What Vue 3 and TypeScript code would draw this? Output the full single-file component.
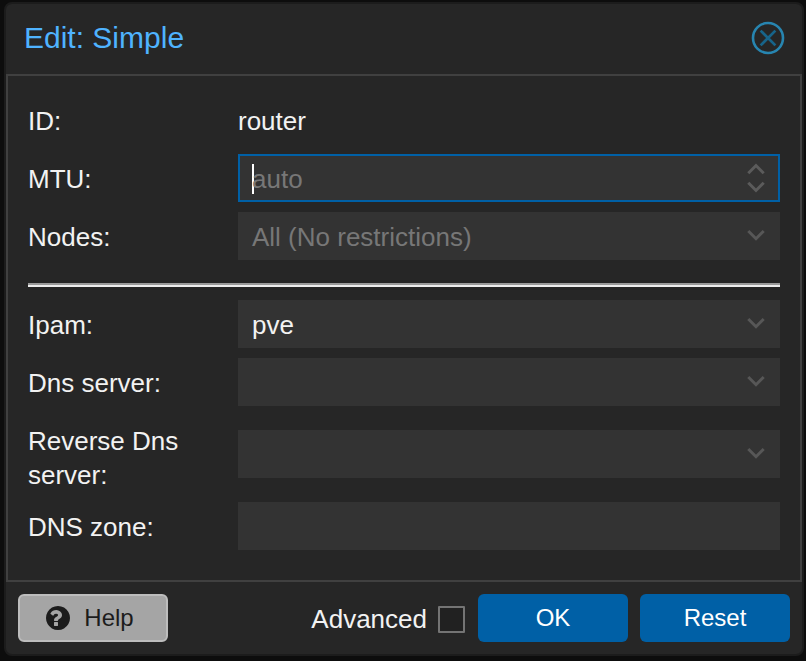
<script setup lang="ts">
import { ref } from 'vue'

interface Field {
  label: string
  value: string
  placeholder?: string
  kind: 'display' | 'spinner' | 'combo' | 'text'
  focused?: boolean
}

const zoneFields: Field[] = [
  { label: 'ID:', value: 'router', kind: 'display' },
  { label: 'MTU:', value: '', placeholder: 'auto', kind: 'spinner', focused: true },
  { label: 'Nodes:', value: '', placeholder: 'All (No restrictions)', kind: 'combo' },
]
const dnsFields: Field[] = [
  { label: 'Ipam:', value: 'pve', kind: 'combo' },
  { label: 'Dns server:', value: '', kind: 'combo' },
  { label: 'Reverse Dns server:', value: '', kind: 'combo' },
  { label: 'DNS zone:', value: '', kind: 'text' },
]
const groups = [zoneFields, dnsFields]
const advanced = ref(false)
</script>

<template>
  <div class="backdrop">
    <section class="window">
      <header class="header">
        <h1 class="title">Edit: Simple</h1>
        <button class="close" type="button">
          <svg width="34" height="34" viewBox="0 0 34 34" fill="none">
            <circle cx="17" cy="17" r="15" stroke="#2785b0" stroke-width="2.6" />
            <path d="M9.6 9.6 24.4 24.4M24.4 9.6 9.6 24.4" stroke="#17648a" stroke-width="2.7" />
          </svg>
        </button>
      </header>

      <main class="panel">
        <template v-for="(group, index) in groups" :key="index">
          <div v-if="index > 0" class="rule"></div>
          <div class="group">
            <div v-for="field in group" :key="field.label" class="row">
              <div class="label">{{ field.label }}</div>
              <div v-if="field.kind === 'display'" class="display">{{ field.value }}</div>
              <div v-else class="field" :class="{ focused: field.focused }">
                <span v-if="field.focused" class="caret"></span>
                <span class="value" :class="{ placeholder: !field.value }">{{ field.value || field.placeholder }}</span>
                <svg v-if="field.kind === 'spinner'" class="trigger" width="20" height="44" viewBox="0 0 20 44" fill="none">
                  <path d="M2.3 17.2 10 9.5 17.7 17.2M2.3 26.8 10 34.5 17.7 26.8" stroke="#5b5b5b" stroke-width="3" />
                </svg>
                <svg v-if="field.kind === 'combo'" class="trigger" width="20" height="44" viewBox="0 0 20 44" fill="none">
                  <path d="M2.3 17 10 24.7 17.7 17" stroke="#575757" stroke-width="3" />
                </svg>
              </div>
            </div>
          </div>
        </template>
      </main>

      <footer class="footer">
        <button class="button help" type="button">
          <svg width="24" height="24" viewBox="128 128 1536 1536" fill="#1c1c1c">
            <path d="M896 1376v-192q0-14-9-23t-23-9h-192q-14 0-23 9t-9 23v192q0 14 9 23t23 9h192q14 0 23-9t9-23zm256-672q0-88-55.5-163t-138.5-116-170-41q-243 0-371 213-15 24 8 42l132 100q7 6 19 6 16 0 25-12 53-68 86-92 34-24 86-24 48 0 85.5 26t37.5 59q0 38-20 61t-68 45q-63 28-115.5 86.5t-52.5 125.5v36q0 14 9 23t23 9h192q14 0 23-9t9-23q0-19 21.5-49.5t54.5-49.5q32-18 49-28.5t46-35 44.5-48 28-60.5 12.5-81zm512 192q0 209-103 385.5t-279.5 279.5-385.5 103-385.5-103-279.5-279.5-103-385.5 103-385.5 279.5-279.5 385.5-103 385.5 103 279.5 279.5 103 385.5z" />
          </svg>
          <span>Help</span>
        </button>
        <label class="advanced">
          <span>Advanced</span>
          <input v-model="advanced" class="checkbox" type="checkbox" />
        </label>
        <button class="button primary" type="button">OK</button>
        <button class="button primary" type="button">Reset</button>
      </footer>
    </section>
  </div>
</template>

<style>
body {
  background: #101010;
}
</style>

<style scoped>
.backdrop {
  box-sizing: border-box;
  width: 806px;
  height: 661px;
  padding: 2px 2px 5px 4px;
  overflow: hidden;
  background: #0d0d0d;
  font-family: "Liberation Sans", Arial, sans-serif;
  font-size: 26px;
  line-height: 34px;
  color: #f2f2f2;
}
.window {
  box-sizing: border-box;
  display: flex;
  flex-direction: column;
  height: 654px;
  border: 2px solid #1c1c1c;
  border-radius: 8px;
  background: #262626;
}
.header {
  box-sizing: border-box;
  display: flex;
  align-items: center;
  justify-content: space-between;
  height: 70px;
  padding: 0 17px 2px 18px;
}
.title {
  margin: 0;
  font-size: 30px;
  font-weight: 400;
  color: #4fb3ff;
}
.close {
  display: flex;
  padding: 0;
  border: 0;
  background: none;
}
.panel {
  box-sizing: border-box;
  height: 508px;
  padding: 20px;
  border: 2px solid #404040;
}
.group {
  display: flex;
  flex-direction: column;
  gap: 10px;
}
.row {
  display: flex;
  align-items: center;
}
.label {
  box-sizing: border-box;
  width: 210px;
  min-height: 48px;
  padding: 8px 40px 0 0;
  align-self: flex-start;
}
.display {
  flex: 1;
  padding-top: 2px;
}
.field {
  box-sizing: border-box;
  display: flex;
  flex: 1;
  align-items: center;
  height: 48px;
  padding: 0 12px;
  border: 2px solid #333333;
  background: #333333;
}
.focused {
  border-color: #0060a6;
}
.caret {
  width: 2px;
  height: 30px;
  margin: 2px -2px 0 0;
  background: #ffffff;
}
.value {
  flex: 1;
  white-space: nowrap;
  padding-top: 2px;
}
.placeholder {
  color: #777777;
}
.rule {
  height: 2px;
  margin: 23px 0 13px;
  border-top: 2px solid #9a9a9a;
  background: #eeeeee;
}
.footer {
  display: flex;
  align-items: center;
  gap: 12px;
  height: 72px;
  padding: 0 12px;
}
.button {
  box-sizing: border-box;
  display: flex;
  align-items: center;
  justify-content: center;
  width: 150px;
  height: 48px;
  padding: 0;
  border: 0;
  border-radius: 6px;
  font: 24px/34px "Liberation Sans", Arial, sans-serif;
}
.help {
  gap: 14px;
  margin-right: auto;
  padding-right: 6px;
  border: 2px solid #bdbdbd;
  background: #a5a5a5;
  color: #1c1c1c;
}
.primary {
  background: #0060a6;
  color: #ffffff;
}
.advanced {
  display: flex;
  align-items: center;
  gap: 11px;
  margin-right: 1px;
  padding-top: 2px;
}
.checkbox {
  appearance: none;
  box-sizing: border-box;
  width: 27px;
  height: 27px;
  margin: 0;
  border: 2px solid #747474;
  border-radius: 1px;
  background: #212121;
}
</style>
